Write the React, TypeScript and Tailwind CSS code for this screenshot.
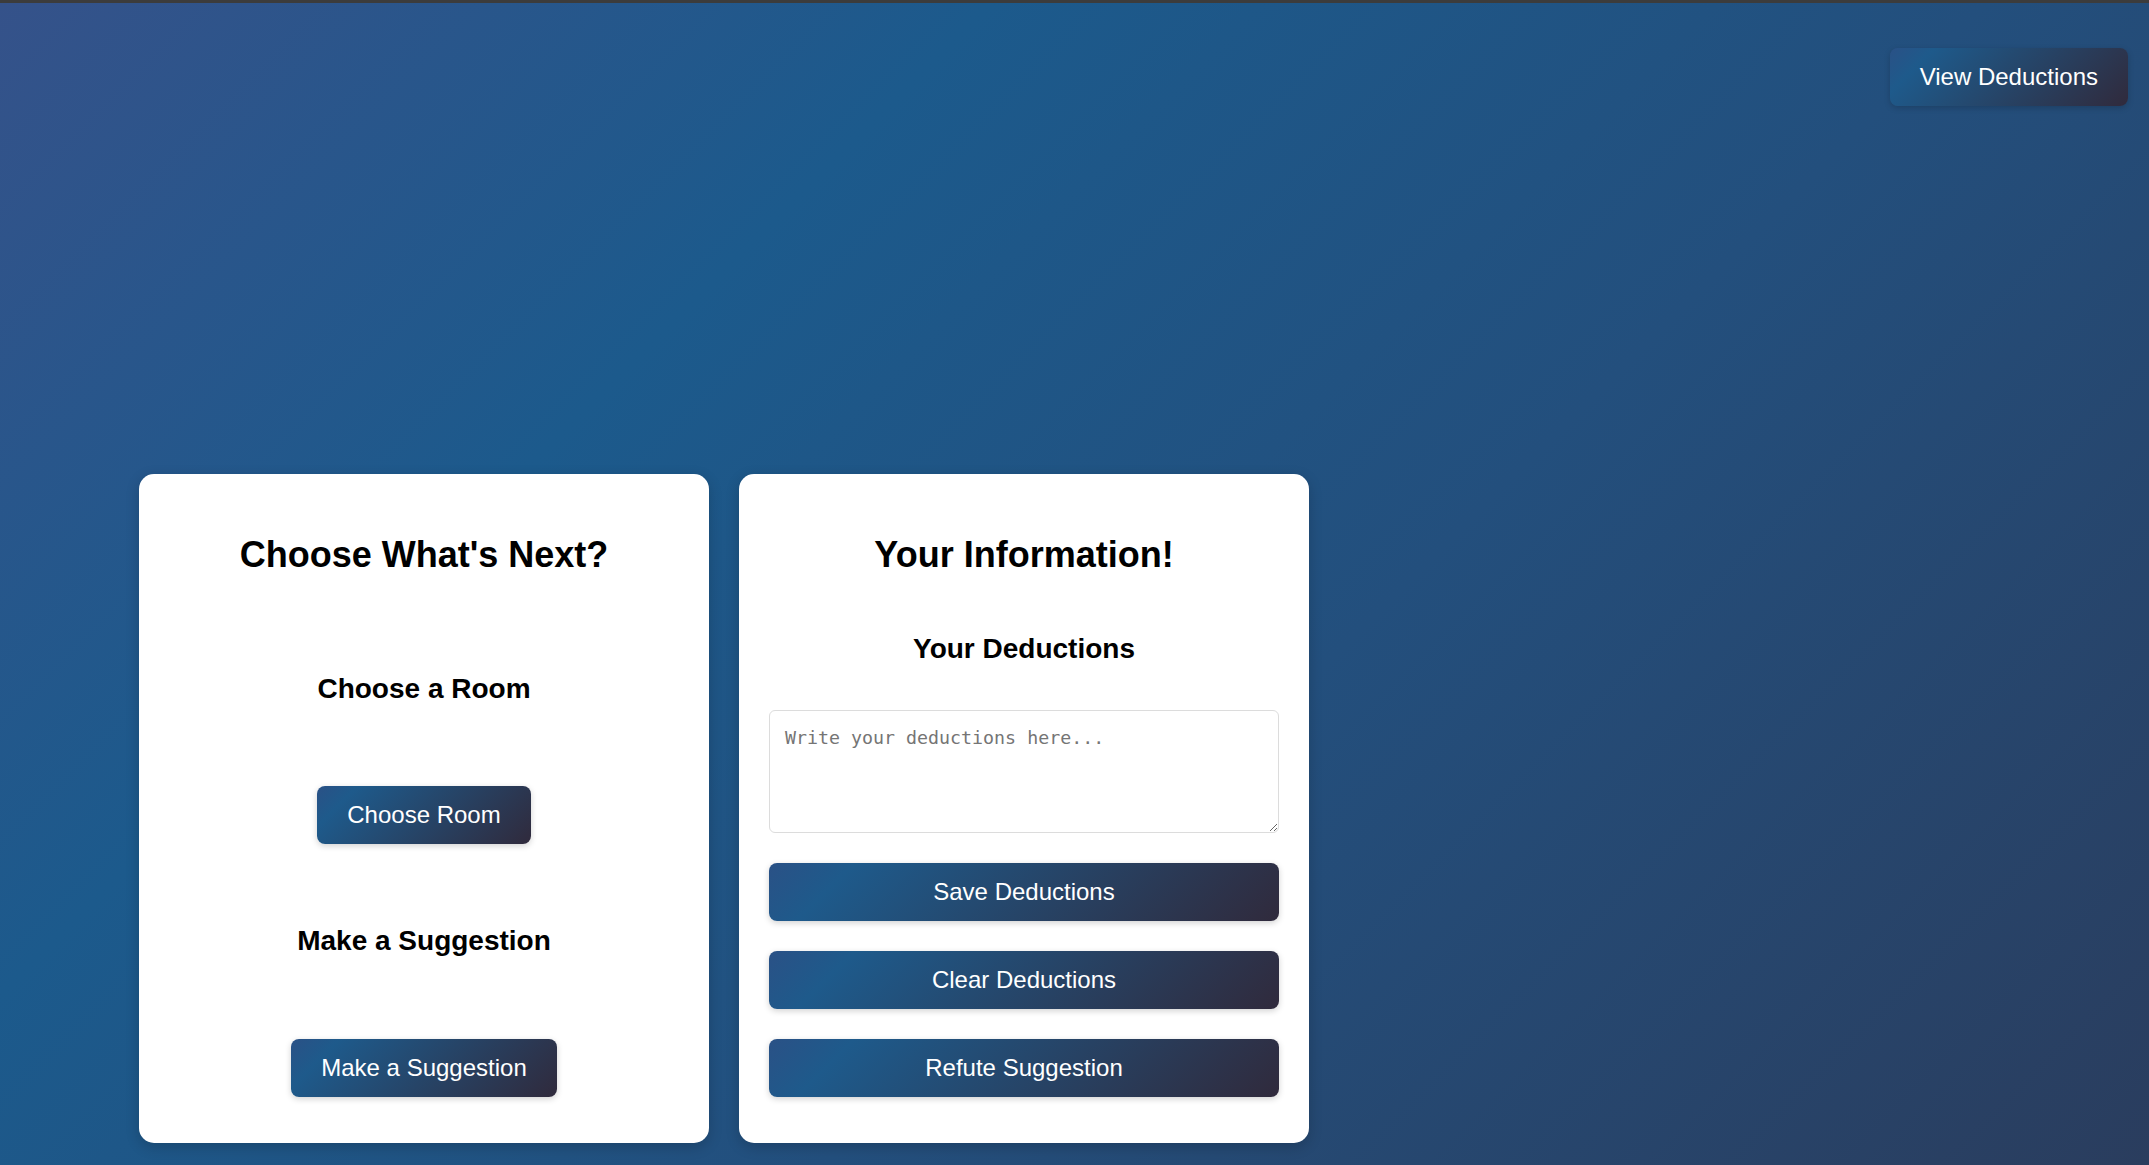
import React from "react";

const btn =
  "rounded-[8px] bg-[linear-gradient(135deg,#2a5186_0%,#1e5a8b_15%,#302a3c_100%)] text-white text-[24px] leading-[28px] py-[15px] shadow-[0_2px_6px_rgba(0,0,0,0.18)]";

const Card = ({ children }: { children: React.ReactNode }) => (
  <div className="w-[570px] bg-white rounded-[15px] shadow-[0_4px_14px_rgba(0,0,0,0.18)] px-[30px] pt-[60px] pb-[46px] flex flex-col items-center text-center">
    {children}
  </div>
);

export default function App() {
  return (
    <div className="h-screen flex flex-col bg-[linear-gradient(135deg,#35528a_0%,#1c5a8c_30%,#234f7d_60%,#2a3d5e_100%)] font-['Liberation_Sans',Arial,sans-serif]">
      <div className="h-[3px] bg-[#3c3c3c]" />
      <div className="flex justify-end pt-[45px] pr-[21px]">
        <button className={btn + " px-[30px]"}>View Deductions</button>
      </div>

      <div className="mt-auto flex gap-[30px] pl-[139px] pb-[22px]">
        <Card>
          <h2 className="text-[36px] leading-[41px] font-bold text-black">Choose What's Next?</h2>
          <h3 className="mt-[98px] text-[28px] leading-[32px] font-bold text-black">Choose a Room</h3>
          <button className={btn + " mt-[81px] px-[30px]"}>Choose Room</button>
          <h3 className="mt-[81px] text-[28px] leading-[32px] font-bold text-black">Make a Suggestion</h3>
          <button className={btn + " mt-[82px] px-[30px]"}>Make a Suggestion</button>
        </Card>

        <Card>
          <h2 className="text-[36px] leading-[41px] font-bold text-black">Your Information!</h2>
          <h3 className="mt-[58px] text-[28px] leading-[32px] font-bold text-black">Your Deductions</h3>
          <textarea
            className="mt-[45px] w-full h-[123px] border border-[#dcdcdc] rounded-[6px] px-[15px] pt-[16px] text-[18.3px] leading-[21px] font-['DejaVu_Sans_Mono',monospace] placeholder:text-[#757575] outline-none"
            placeholder="Write your deductions here..."
          />
          <button className={btn + " mt-[30px] w-full"}>Save Deductions</button>
          <button className={btn + " mt-[30px] w-full"}>Clear Deductions</button>
          <button className={btn + " mt-[30px] w-full"}>Refute Suggestion</button>
        </Card>
      </div>
    </div>
  );
}
